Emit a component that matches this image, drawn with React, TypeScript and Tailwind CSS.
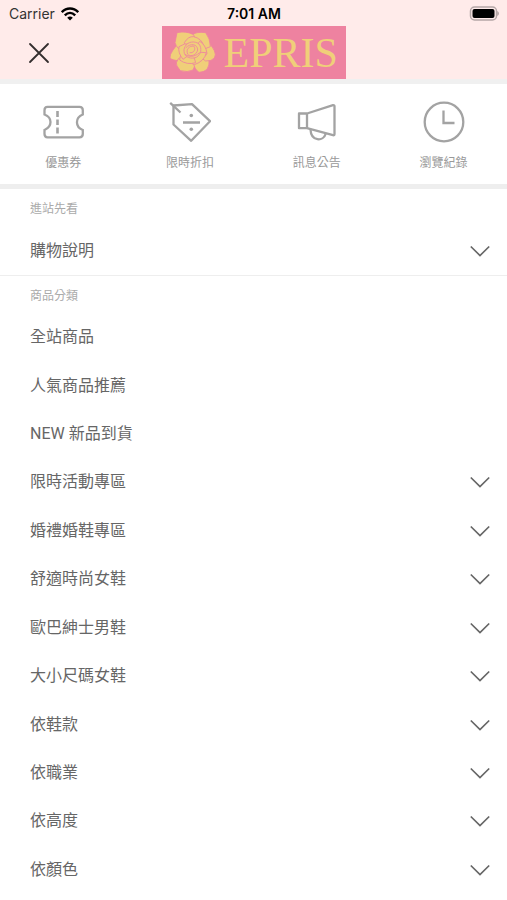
import { useState } from "react";
import type { ReactNode } from "react";

const TicketIcon = () => (
  <svg width="42" height="42" viewBox="0 0 42 42" fill="none" stroke="#a3a3a3" strokeWidth="2.300">
    <path d="M5.500 5.800H37.500Q40.800 5.800 40.800 9.200V13.500C33 16.500 33 26 40.800 29V33Q40.800 36.300 37.500 36.300H5.500Q2.500 36.300 2.500 33V29C10.500 25.500 10.500 16.500 2.500 13.500V9.200Q2.500 5.800 5.500 5.800Z" />
    <path d="M15.500 10V16M15.500 18.500V24M15.500 26.500V32.500" strokeWidth="2.600" />
  </svg>
);

const TagIcon = () => (
  <svg width="42" height="42" viewBox="0 0 42 42" fill="none" stroke="#a3a3a3" strokeWidth="2.300" strokeLinejoin="round">
    <path d="M4.500 4.500L23 3.200L41 20.200L22.200 39.800L4.500 23.500Z" />
    <path d="M1.200 1.800L11.500 11.500M14 21.500H31" />
    <circle cx="22.300" cy="14.500" r="1.800" fill="#a3a3a3" stroke="none" />
    <circle cx="22.300" cy="28.300" r="1.800" fill="#a3a3a3" stroke="none" />
  </svg>
);

const HornIcon = () => (
  <svg width="42" height="42" viewBox="0 0 42 42" fill="none" stroke="#a3a3a3" strokeWidth="2.300" strokeLinejoin="round">
    <path d="M3 12.500H11L37 4.200Q38.500 4 38.500 5.500V33Q38.500 34.500 37 34.200L11 27.200H3Z" />
    <path d="M11 12.500V27.200M14.500 28.500C15 40.500 27.500 41 29.800 32.500" />
  </svg>
);

const ClockIcon = () => (
  <svg width="42" height="42" viewBox="0 0 42 42" fill="none" stroke="#a3a3a3" strokeWidth="2.300">
    <circle cx="21" cy="21" r="19.300" />
    <path d="M20.500 9.500V22H31.500" />
  </svg>
);

const Chevron = ({ open }: { open: boolean }) => (
  <svg
    width="20"
    height="12"
    viewBox="0 0 20 12"
    fill="none"
    stroke="#666666"
    strokeWidth="1.700"
    className={open ? "rotate-180" : ""}
  >
    <path d="M0.800 1.500L10 10.500L19.200 1.500" />
  </svg>
);

const Rose = () => (
  <svg width="47" height="43" viewBox="2 3 141 129" fill="#f0cf79" stroke="#ee82a0" strokeWidth="2.500" strokeLinejoin="round">
    {/* outer petals */}
    <path d="M28 42L14 60Q4 74 5 84Q10 90 34 93L60 70Z" />
    <path d="M30 86Q20 100 26 108L36 122Q58 128 74 120L84 96L60 70Z" />
    <path d="M76 96Q76 116 92 127Q108 126 116 118Q124 106 122 90L80 72Z" />
    <path d="M114 38Q132 44 138 62Q144 74 138 84Q130 94 112 93L80 70Z" />
    <path d="M70 16Q82 4 112 8Q126 26 126 50L100 60L74 44Z" />
    <path d="M26 8Q54 2 76 14L84 40L44 62Q26 58 20 38Z" />
    {/* middle petals */}
    <path d="M48 38Q60 18 76 20Q100 26 106 46L88 66L60 60Z" />
    <path d="M94 34Q112 44 116 70Q108 86 92 88L72 66Z" />
    <path d="M114 68Q108 94 78 104Q62 98 60 84L84 66Z" />
    <path d="M82 98Q56 106 34 90Q32 76 48 64L74 72Z" />
    <path d="M44 88Q28 68 32 50Q48 38 66 42L66 72Z" />
    {/* heart */}
    <path d="M50 50C58 34 80 32 92 42C102 56 98 74 84 82C68 88 52 82 48 70C46 62 47 55 50 50Z" />
    <path d="M52 54C66 38 88 42 88 60C84 76 70 80 58 74" />
    <path d="M58 72C52 58 62 48 76 48C84 58 76 70 64 68" />
    <path d="M50 72C60 82 78 82 94 68" fill="none" />
  </svg>
);

const shortcuts: { label: string; icon: ReactNode }[] = [
  { label: "優惠券", icon: <TicketIcon /> },
  { label: "限時折扣", icon: <TagIcon /> },
  { label: "訊息公告", icon: <HornIcon /> },
  { label: "瀏覽紀錄", icon: <ClockIcon /> },
];

const categories = [
  { label: "全站商品", expandable: false },
  { label: "人氣商品推薦", expandable: false },
  { label: "NEW 新品到貨", expandable: false },
  { label: "限時活動專區", expandable: true },
  { label: "婚禮婚鞋專區", expandable: true },
  { label: "舒適時尚女鞋", expandable: true },
  { label: "歐巴紳士男鞋", expandable: true },
  { label: "大小尺碼女鞋", expandable: true },
  { label: "依鞋款", expandable: true },
  { label: "依職業", expandable: true },
  { label: "依高度", expandable: true },
  { label: "依顏色", expandable: true },
];

function MenuRow({ label, expandable }: { label: string; expandable: boolean }) {
  const [open, setOpen] = useState(false);

  if (!expandable) {
    return (
      <a href="#" className="flex items-center w-full h-full min-h-12 pl-[30px] pr-[17px] pt-0.5">
        {label}
      </a>
    );
  }

  return (
    <button
      type="button"
      aria-expanded={open}
      onClick={() => setOpen(!open)}
      className="flex items-center justify-between w-full h-full min-h-12 pl-[30px] pr-[17px] pt-0.5 text-left"
    >
      <span>{label}</span>
      <Chevron open={open} />
    </button>
  );
}

export default function App() {
  return (
    <div className="min-h-screen flex flex-col bg-white text-base text-[#666666] font-['Roboto','Noto_Sans_CJK_TC',sans-serif]">
      {/* Header */}
      <header className="bg-[#ffebea] border-b-5 border-[#f0f0f0]">
        <div className="grid grid-cols-3 items-center h-[26px] pl-[9px] pr-2 pt-px text-sm text-black font-['Inter',sans-serif]">
          <div className="flex items-center gap-1.5 text-[#333333]">
            <span>Carrier</span>
            <svg width="18" height="14" viewBox="0 0 18 14" fill="none" stroke="#000000" strokeWidth="2.400">
              <path d="M0.800 5.200C5.500 0.300 12.500 0.300 17.200 5.200M3.800 8.400C7 5.200 11 5.200 14.200 8.400" />
              <path d="M6.200 10.800C8 9.200 10 9.200 11.800 10.800L9 13.600Z" fill="#000000" stroke="none" />
            </svg>
          </div>
          <span className="text-center font-semibold">7:01 AM</span>
          <svg width="30" height="15" viewBox="0 0 30 15" className="justify-self-end">
            <rect x="1.500" y="1" width="26" height="13" rx="4" fill="none" stroke="#b5a7a7" strokeWidth="1.500" />
            <rect x="3.500" y="3" width="22" height="9" rx="2" fill="#000000" />
            <path d="M28.300 5V10C30.300 9 30.300 6 28.300 5Z" fill="#a89b9b" />
          </svg>
        </div>
        <div className="grid grid-cols-[1fr_auto_1fr] items-center h-[53px]">
          <button type="button" aria-label="關閉" className="justify-self-start ml-7">
            <svg width="22" height="22" viewBox="0 0 22 22" fill="none" stroke="#332d2d" strokeWidth="1.800" strokeLinecap="round">
              <path d="M2 2L20 20M20 2L2 20" />
            </svg>
          </button>
          <a href="#" className="flex items-center gap-2 h-[53px] w-[184px] pl-[7px] bg-[#ee82a0]">
            <Rose />
            <span className="text-[42px] leading-none text-[#f0cf79] font-['Liberation_Serif',serif]">EPRIS</span>
          </a>
        </div>
      </header>

      {/* Shortcuts */}
      <nav className="grid grid-cols-4 h-[105px] pt-[17px] border-b-5 border-[#eeeeee] text-xs text-[#999999]">
        {shortcuts.map((item) => (
          <a key={item.label} href="#" className="flex flex-col items-center gap-3">
            {item.icon}
            <span>{item.label}</span>
          </a>
        ))}
      </nav>

      {/* Guide */}
      <section className="border-b border-[#eeeeee]">
        <h2 className="pt-3 pl-[30px] h-9 text-xs text-[#aaaaaa]">進站先看</h2>
        <div className="h-[50px]">
          <MenuRow label="購物說明" expandable />
        </div>
      </section>

      {/* Categories */}
      <section className="flex flex-col flex-1 pb-[7px]">
        <h2 className="pt-3 pl-[30px] h-9 text-xs text-[#aaaaaa]">商品分類</h2>
        <ul className="grid flex-1 auto-rows-fr">
          {categories.map((item) => (
            <li key={item.label}>
              <MenuRow label={item.label} expandable={item.expandable} />
            </li>
          ))}
        </ul>
      </section>
    </div>
  );
}
